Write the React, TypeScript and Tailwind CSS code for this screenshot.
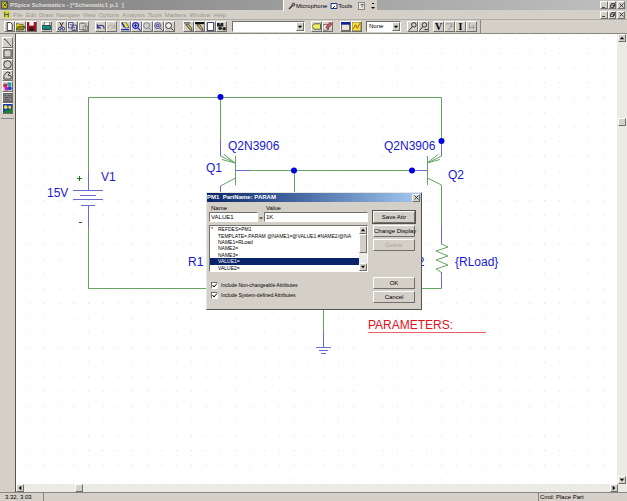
import React from "react";

const raised =
  "border border-t-white border-l-white border-r-[#716f6a] border-b-[#716f6a] bg-[#d4d0c8]";
const sunken =
  "border border-t-[#716f6a] border-l-[#716f6a] border-r-white border-b-white bg-white";

const menus = ["File", "Edit", "Draw", "Navigate", "View", "Options", "Analysis", "Tools", "Markers", "Window", "Help"];

const glyphs: Record<string, React.ReactNode> = {
  New: <path d="M2.500.500h3.500l2 2v7h-5.500z" fill="#fff" stroke="#222" />,
  Open: (
    <>
      <path d="M0 2h3l1 1h4v5H0z" fill="#e8e020" stroke="#444400" strokeWidth=".8" />
      <path d="M0 9l2-4h8L8 9z" fill="#8a8a10" stroke="#333" strokeWidth=".7" />
    </>
  ),
  Save: (
    <>
      <path d="M0 0h10v10H0z" fill="#a80c20" />
      <path d="M2.500 0h5v4h-5z" fill="#f2f2f2" />
      <path d="M2.500 6h5v4h-5z" fill="#222" />
    </>
  ),
  Print: (
    <>
      <path d="M3 0h6L8 4H2z" fill="#fff" stroke="#333" strokeWidth=".7" />
      <path d="M0 4h10v4H0z" fill="#109090" stroke="#222" strokeWidth=".7" />
      <path d="M1.500 8.500h7" stroke="#204040" />
    </>
  ),
  Cut: (
    <>
      <path d="M3 0l3 6M7 0L4 6" stroke="#222" />
      <circle cx="3" cy="7.500" r="1.500" stroke="#20207a" />
      <circle cx="7" cy="7.500" r="1.500" stroke="#20207a" />
    </>
  ),
  Copy: <path d="M.500.500h5v6h-5zM4.500 3.500h5v6h-5zM2 3h2M6 6h2M6 8h2" fill="#dde" stroke="#333366" strokeWidth=".9" />,
  Paste: <path d="M.500 1.500h7v7h-7zM2.500 1h3M4.500 4.500h5v5h-5z" fill="#d4d0c8" stroke="#77756f" strokeWidth=".9" />,
  Undo: <path d="M1.500 2.500v4h4M1.500 6C3 3 9 2 9 7.500" stroke="#303080" strokeWidth="1.200" />,
  Redo: <path d="M8.500 2.500v4h-4M8.500 6C7 3 1 2 1 7.500" stroke="#aaa79f" />,
  Redraw: (
    <>
      <path d="M1 0h4l4 6-4 1z" fill="#f0e820" stroke="#3040c0" strokeWidth=".8" />
      <path d="M1 1l3 5M0 8.500h9" stroke="#2030d0" strokeWidth="1.600" />
    </>
  ),
  "Zoom in": <path d="M4 .700a3.300 3.300 0 1 1 0 6.600a3.300 3.300 0 1 1 0-6.600M6.500 6.500l3 3M2 4h4M4 2v4" stroke="#2020c0" strokeWidth="1.200" />,
  "Zoom out": <path d="M4 .700a3.300 3.300 0 1 1 0 6.600a3.300 3.300 0 1 1 0-6.600M6.500 6.500l3 3" stroke="#77779a" />,
  "Zoom area": <path d="M4 .700a3.300 3.300 0 1 1 0 6.600a3.300 3.300 0 1 1 0-6.600M6.500 6.500l3 3M2.500 3h3v2h-3z" stroke="#4545a0" />,
  "Zoom fit": <path d="M4 .700a3.300 3.300 0 1 1 0 6.600a3.300 3.300 0 1 1 0-6.600M6.500 6.500l3 3" fill="#eee" stroke="#333" />,
  Wire: (
    <>
      <path d="M0 1h7" stroke="#222" />
      <path d="M2 3l5 6 2 .500L8.500 7 5 2.500z" fill="#c0b060" stroke="#333" strokeWidth=".8" />
    </>
  ),
  Bus: (
    <>
      <path d="M0 1.200h10" stroke="#111" strokeWidth="2.400" />
      <path d="M2 3l5 6 2 .500L8.500 7 5 2.500z" fill="#c0b060" stroke="#333" strokeWidth=".8" />
    </>
  ),
  Block: <path d="M1.500.500h7v9h-7z" fill="#fff" stroke="#222266" />,
  "Get part": (
    <>
      <path d="M0 1h3v2h1V1h3v4H0z" fill="#222" />
      <circle cx="3.500" cy="7" r="2" fill="#222" />
      <circle cx="8" cy="7.500" r="2" fill="#222" />
    </>
  ),
  "Edit attributes": <path d="M0 5l2.500-3h7v6h-7z" fill="#f0f060" stroke="#444" strokeWidth=".9" />,
  "Edit symbol": (
    <>
      <path d="M0 3h6v6H0z" fill="#eee" stroke="#444" strokeWidth=".8" />
      <path d="M3 6l5-6 2 2-5 6z" fill="#d85050" stroke="#702020" strokeWidth=".7" />
    </>
  ),
  "Setup analysis": (
    <>
      <path d="M.500.500h9v9h-9z" fill="#e8e4d8" stroke="#333" strokeWidth=".8" />
      <path d="M0 1.500h10" stroke="#1020a0" strokeWidth="3" />
    </>
  ),
  Simulate: (
    <>
      <path d="M0 0h10v10H0z" fill="#f0e440" stroke="#555" strokeWidth=".8" />
      <path d="M1 8l3-5 2 4 3-6" stroke="#b04010" />
    </>
  ),
  "Voltage marker": <path d="M6.500.700a2.500 2.500 0 1 1 0 5a2.500 2.500 0 1 1 0-5M4.500 5.500L1 9.500" stroke="#222" />,
  "Current marker": <path d="M6 .700a2.500 2.500 0 1 1 0 5a2.500 2.500 0 1 1 0-5M4 5.500L.500 9.500M6 8.500h4" stroke="#222" />,
  "Hide voltage": <path d="M1 2h7L4 9M6 5h3" stroke="#96938c" />,
  "Hide current": <path d="M3 1v7M3 6h6M7 3v5" stroke="#96938c" />,
  Line: <path d="M1 1.500C4 1.500 4 4 9 9" stroke="#333" />,
  Rectangle: <path d="M1 1h8v8H1z" stroke="#333" />,
  Circle: <circle cx="5" cy="5" r="4.200" stroke="#333" />,
  Polyline: <path d="M1 9V5l3.500-4L8 2 5.500 4.500 9 5.500V9z" stroke="#333" />,
  Text: (
    <>
      <circle cx="2.500" cy="4" r="2.300" fill="#d02050" />
      <circle cx="7" cy="2.500" r="2.300" fill="#20a0a0" />
      <circle cx="4" cy="7.500" r="2.300" fill="#c020c0" />
      <circle cx="7.500" cy="7" r="2.200" fill="#2040d0" />
    </>
  ),
  "Text box": <path d="M0 .500h10v9H0zM1.500 3h2.500M5.500 3h3M1.500 5h4M6.500 5h2M2 7.500h5" fill="#8a8a8a" stroke="#444" strokeWidth=".9" />,
  Picture: (
    <>
      <path d="M0 0h10v10H0z" fill="#1838c0" />
      <circle cx="3" cy="3.500" r="2" fill="#f0e830" />
      <path d="M0 10l4-4 2 1 2-3 2 2v4z" fill="#208030" />
      <path d="M6 2h3v3H6z" fill="#e8e040" />
    </>
  ),
};

function ToolButton({ name }: { name: string }) {
  return (
    <button type="button" aria-label={name} className={`flex size-[11px] items-center justify-center ${raised}`}>
      <svg viewBox="0 0 10 10" className="size-[9px] shrink-0" fill="none">
        {glyphs[name]}
      </svg>
    </button>
  );
}

function LetterButton({ letter, name }: { letter: string; name: string }) {
  return (
    <button
      type="button"
      aria-label={name}
      className={`flex size-[11px] items-center justify-center font-['Liberation_Serif',serif] text-[10px] font-bold leading-none ${raised}`}
    >
      {letter}
    </button>
  );
}

function Group({ names, className }: { names: string[]; className: string }) {
  return (
    <div className={`flex ${className}`}>
      {names.map((n) => (
        <ToolButton key={n} name={n} />
      ))}
    </div>
  );
}

const arrows = {
  up: "M1 5h5L3.500 2z",
  down: "M1 2h5L3.500 5z",
  left: "M5 1v5L2 3.500z",
  right: "M2 1v5l3-2.500z",
};

function Arrow({ dir, className = "" }: { dir: keyof typeof arrows; className?: string }) {
  return (
    <button type="button" aria-label={`Scroll ${dir}`} className={`flex shrink-0 items-center justify-center ${raised} ${className}`}>
      <svg viewBox="0 0 7 7" className="size-[6px]">
        <path d={arrows[dir]} />
      </svg>
    </button>
  );
}

function Combo({ label, value, className }: { label: string; value: string; className: string }) {
  return (
    <div className={`relative h-[11px] ${className}`}>
      <select aria-label={label} defaultValue={value} className={`block size-full appearance-none pl-0.5 leading-[9px] ${sunken}`}>
        <option>{value}</option>
      </select>
      <span className={`pointer-events-none absolute right-px top-px flex h-[9px] w-2 items-center justify-center ${raised}`}>
        <svg viewBox="0 0 7 7" className="size-[6px]">
          <path d={arrows.down} />
        </svg>
      </span>
    </div>
  );
}

const windowGlyphs = {
  Minimize: "M1 5.500h3",
  Restore: "M2.500 2.500v-1h3v3h-1M1.500 3h3v2.500h-3z",
  Close: "M1.500 1.500l4 4M5.500 1.500l-4 4",
};

function WindowButton({ name }: { name: keyof typeof windowGlyphs }) {
  return (
    <button type="button" aria-label={name} className={`flex size-2 items-center justify-center ${raised}`}>
      <svg viewBox="0 0 7 7" className="size-[7px] shrink-0" fill="none" stroke="#222" strokeWidth=".8">
        <path d={windowGlyphs[name]} />
      </svg>
    </button>
  );
}

function WindowButtons() {
  return (
    <div className="ml-auto flex pr-0.5">
      <WindowButton name="Minimize" />
      <WindowButton name="Restore" />
      <span className="w-px" />
      <WindowButton name="Close" />
    </div>
  );
}

const GRID = 14.71;

function Schematic() {
  return (
    <svg className="block size-full" fill="none" aria-label="Schematic">
      <defs>
        <pattern id="grid" x={72} y={63} width={GRID} height={GRID} patternUnits="userSpaceOnUse">
          <rect width="1" height="1" fill="#dcdcdc" />
        </pattern>
      </defs>
      <rect width="100%" height="100%" fill="url(#grid)" />
      <g transform="translate(-16 -34)">
        <g stroke="#67a567">
          <path d="M88.500 172V97.500H441.500V141M220.500 97v43M250 170.500H412M294.500 170v40M88.500 228v60.500H441.500M323.500 300v31" />
          <path d="M220.500 156l15 7M224 154.500l11 8.500l-13-3.500M441.500 156l-14 7M438 154.500l-11 8.500l13-3.500" />
          <path d="M235.500 156v29M427.500 156v29M235.500 178l-15 8M427.500 178l14 7v54" />
          <path d="M441.500 244l6.500 3-12 4 12 5-12 4 12 5-12 4 5.500 3.500" />
        </g>
        <g stroke="#6c6cd0">
          <path d="M88.500 172v18M73 190.500h30M80 195.500h16M73 199.500h30M81 205.500h14M88.500 206v22" />
          <path d="M220.500 140v16M220.500 186v14M235 170.500h15M412 170.500h15M441.500 141v15M441.500 225v19M441.500 272v16" />
          <path d="M323.500 331v16M316 347.500h15M319 350.500h9M321 353.500h5" />
        </g>
        <g fill="#0000e0">
          <circle cx="220.500" cy="97" r="3" />
          <circle cx="294" cy="170.500" r="3" />
          <circle cx="412" cy="170.500" r="3" />
          <circle cx="441.500" cy="141" r="3" />
        </g>
        <g fill="#1818d0" className="font-['Liberation_Sans',sans-serif] text-[12px]">
          <text x="47" y="197">15V</text>
          <text x="101" y="181">V1</text>
          <text x="206" y="172">Q1</text>
          <text x="228" y="150">Q2N3906</text>
          <text x="384" y="150">Q2N3906</text>
          <text x="448" y="179">Q2</text>
          <text x="188" y="266">R1</text>
          <text x="409" y="266">R2</text>
          <text x="455" y="266">{"{RLoad}"}</text>
        </g>
        <path d="M77 178.500h5M79.500 176v5" stroke="#108010" />
        <path d="M79 222.500h3" stroke="#444" />
        <text x="368" y="329" fill="#e01020" className="font-['Liberation_Sans',sans-serif] text-[12px]">PARAMETERS:</text>
        <path d="M368 332.500H486" stroke="#f06068" />
      </g>
    </svg>
  );
}

const attributes = [
  "REFDES=PM1",
  "TEMPLATE=.PARAM @NAME1=@VALUE1 #NAME2/@NA",
  "NAME1=RLoad",
  "NAME2=",
  "NAME3=",
  "VALUE1=",
  "VALUE2=",
];

function DialogButton({ children, className = "", disabled = false }: { children: string; className?: string; disabled?: boolean }) {
  return (
    <button type="button" disabled={disabled} className={`h-3 w-full whitespace-nowrap leading-[10px] disabled:text-[#aaa69e] ${raised} ${className}`}>
      {children}
    </button>
  );
}

function CheckRow({ label }: { label: string }) {
  return (
    <label className="flex h-[10px] items-center gap-[3px] text-[5px]">
      <span className="relative size-[7px]">
        <input type="checkbox" defaultChecked className={`block size-[7px] appearance-none ${sunken}`} />
        <svg viewBox="0 0 7 7" className="pointer-events-none absolute inset-0 size-[7px]" fill="none" stroke="#000">
          <path d="M1.500 3l1.500 2 3-3.500" />
        </svg>
      </span>
      <span>{label}</span>
    </label>
  );
}

function AttributeDialog() {
  return (
    <div
      role="dialog"
      aria-label="PM1 PartName: PARAM"
      className="absolute left-[190px] top-[158px] flex w-[216px] flex-col border border-t-[#e8e6e0] border-l-[#e8e6e0] border-r-[#55534e] border-b-[#55534e] bg-[#d4d0c8] text-[6px] leading-[7px]"
    >
      <div className="flex h-[9px] items-center bg-linear-to-r from-[#0a246a] to-[#a6caf0] pr-px font-bold text-white">
        <span className="whitespace-pre">PM1  PartName: PARAM</span>
        <div className="ml-auto flex">
          <WindowButton name="Close" />
        </div>
      </div>
      <div className="flex gap-[5px] pb-[6px] pl-0.5 pr-[6px] pt-[3px]">
        <div className="flex w-[159px] shrink-0 flex-col pb-0.5">
          <div className="flex items-end">
            <div className="w-[49px]">
              <label htmlFor="attr-name" className="block pl-0.5">Name</label>
              <input id="attr-name" defaultValue="VALUE1" className={`block h-[10px] w-full px-px ${sunken}`} />
            </div>
            <span className="w-[6px] text-center">=</span>
            <div className="flex-1">
              <label htmlFor="attr-value" className="block pl-0.5">Value</label>
              <input id="attr-value" defaultValue="1K" className={`block h-[10px] w-full px-px ${sunken}`} />
            </div>
          </div>
          <div className={`mt-[3px] flex h-[47px] ${sunken}`}>
            <ul role="listbox" aria-label="Attributes" className="grid min-w-0 flex-1 grid-rows-7 overflow-hidden text-[5px]">
              {attributes.map((a, i) => (
                <li
                  key={a}
                  role="option"
                  aria-selected={i === 5}
                  className="flex items-center whitespace-nowrap leading-[6px] aria-selected:bg-[#0a246a] aria-selected:text-white"
                >
                  <span className="w-2 shrink-0 pl-px">{i === 0 ? "*" : ""}</span>
                  {a}
                </li>
              ))}
            </ul>
            <div className="flex w-2 flex-col bg-[#eceae5]">
              <Arrow dir="up" className="h-2" />
              <div className={`h-[19px] ${raised}`} />
              <Arrow dir="down" className="mt-auto h-2" />
            </div>
          </div>
          <div className="mt-2 flex flex-col pb-px pl-0.5">
            <CheckRow label="Include Non-changeable Attributes" />
            <CheckRow label="Include System-defined Attributes" />
          </div>
        </div>
        <div className="flex min-w-0 flex-1 flex-col gap-0.5 pt-[6px]">
          <DialogButton className="outline outline-[#55534e]">Save Attr</DialogButton>
          <DialogButton>Change Display</DialogButton>
          <DialogButton disabled>Delete</DialogButton>
          <div className="mt-auto flex flex-col gap-0.5">
            <DialogButton>OK</DialogButton>
            <DialogButton>Cancel</DialogButton>
          </div>
        </div>
      </div>
    </div>
  );
}

export default function App() {
  return (
    <div className="relative flex h-screen flex-col overflow-hidden bg-[#d4d0c8] font-['Liberation_Sans',sans-serif] text-[6px] leading-[8px] text-black">
      <header className="flex h-[10px] shrink-0 items-center bg-linear-to-r from-[#808080] to-[#c0c0c0] pl-px font-bold text-[#e0ddd6]">
        <svg viewBox="0 0 10 10" className="mr-px size-2" fill="none">
          <path d="M1 1h7v8H1z" fill="#d8d030" stroke="#333" />
          <path d="M3 7l5-6M3 3l4 4" stroke="#222" />
        </svg>
        <span className="whitespace-pre">PSpice Schematics - [*Schematic1 p.1  ]</span>
        <WindowButtons />
      </header>

      <div className="absolute left-[283px] top-0 flex h-[11px] w-[94px] items-center border-l border-l-white bg-[#d4d0c8] pl-1">
        <button type="button" className="flex items-center">
          <svg viewBox="0 0 8 8" className="size-2" fill="none">
            <path d="M1 7l4-4" stroke="#333" strokeWidth="1.500" />
            <circle cx="5.500" cy="2.500" r="1.500" fill="#888" stroke="#333" strokeWidth=".7" />
          </svg>
          Microphone
        </button>
        <button type="button" className="ml-[3px] flex items-center">
          <svg viewBox="0 0 8 8" className="size-2" fill="none">
            <path d="M1 1.500h6v5H1z" fill="#fff" stroke="#1830a0" />
            <path d="M2 7l3-3" stroke="#333" />
          </svg>
          Tools
        </button>
        <button type="button" aria-label="Help" className="ml-[6px] flex h-2 w-[7px] items-center justify-center border border-[#8a8780] bg-[#eceae5]">?</button>
        <svg viewBox="0 0 4 8" className="ml-[6px] h-2 w-1">
          <path d="M1 1h2v1H1zM0 5h4L2 7z" />
        </svg>
      </div>

      <nav className="flex h-[9px] shrink-0 items-center gap-[3px] pl-[3px] text-[#98958d]">
        <svg viewBox="0 0 8 8" className="size-[7px]" fill="none">
          <path d="M0 0h8v8H0z" fill="#d8d850" />
          <path d="M2 1v6M2 4h4M6 2v5" stroke="#444" />
        </svg>
        {menus.map((m) => (
          <button type="button" key={m}>{m}</button>
        ))}
        <WindowButtons />
      </nav>

      <div className="flex h-[15px] shrink-0 items-center border-y border-t-[#b0ada6] border-b-[#8a8780] pl-1">
        <Group names={["New", "Open", "Save"]} className="" />
        <Group names={["Print"]} className="ml-1" />
        <Group names={["Cut", "Copy", "Paste"]} className="ml-1" />
        <Group names={["Undo", "Redo"]} className="ml-[6px]" />
        <Group names={["Redraw", "Zoom in", "Zoom out", "Zoom area", "Zoom fit"]} className="ml-[3px]" />
        <Group names={["Wire", "Bus", "Block", "Get part"]} className="ml-2" />
        <Combo label="Part" value="" className="ml-[5px] w-[73px]" />
        <Group names={["Edit attributes", "Edit symbol"]} className="ml-[6px]" />
        <Group names={["Setup analysis", "Simulate"]} className="ml-[7px]" />
        <Combo label="Marker" value="None" className="ml-1 w-[35px]" />
        <Group names={["Voltage marker", "Current marker"]} className="ml-[6px]" />
        <div className="ml-1 flex">
          <LetterButton letter="V" name="Show voltages" />
          <ToolButton name="Hide voltage" />
          <LetterButton letter="I" name="Show currents" />
          <ToolButton name="Hide current" />
        </div>
        <span className="ml-[3px] h-[13px] border-l border-[#8a8780]" />
      </div>

      <div className="flex min-h-0 flex-1">
        <aside className="flex w-[15px] shrink-0 flex-col items-center pt-[3px]">
          {["Line", "Rectangle", "Circle", "Polyline", "Text", "Text box", "Picture"].map((n) => (
            <ToolButton key={n} name={n} />
          ))}
          <span className="mt-1 w-[13px] border-t border-[#8a8780]" />
        </aside>
        <div className="flex min-w-0 flex-1 flex-col border-l border-[#55534e]">
          <div className="flex min-h-0 flex-1">
            <main className="relative min-w-0 flex-1 overflow-hidden bg-white">
              <Schematic />
              <AttributeDialog />
            </main>
            <div className="flex w-[10px] shrink-0 flex-col items-center bg-[#eceae5]">
              <Arrow dir="up" className="size-2" />
              <div className={`mt-[76px] size-2 ${raised}`} />
              <Arrow dir="down" className="mt-auto size-2" />
            </div>
          </div>
          <div className="flex h-2 shrink-0 bg-[#eceae5] pr-[9px]">
            <Arrow dir="left" className="size-2" />
            <div className={`ml-[51px] size-2 ${raised}`} />
            <Arrow dir="right" className="ml-auto size-2" />
          </div>
        </div>
      </div>

      <footer className="flex h-[9px] shrink-0 items-center border-t border-[#8a8780]">
        <span className="w-[43px] pl-[5px]">3.32, 3.03</span>
        <span className="h-full flex-1 border-l border-[#8a8780]" />
        <span className="h-full w-[89px] border-l border-[#8a8780] pl-px">Cmd: Place Part</span>
      </footer>
    </div>
  );
}
